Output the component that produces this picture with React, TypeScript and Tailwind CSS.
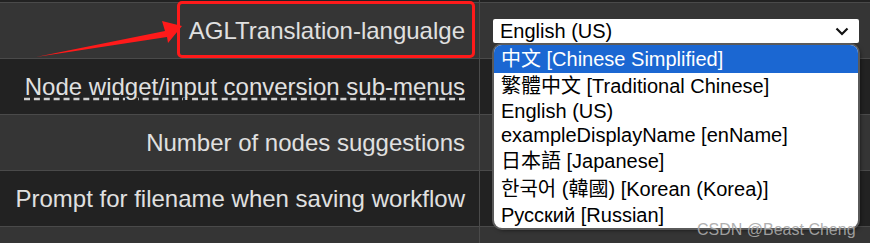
import React from "react";

const rows = [
  { label: "AGLTranslation-langualge", dark: false },
  { label: "Node widget/input conversion sub-menus", dark: true, dashed: true },
  { label: "Number of nodes suggestions", dark: false },
  { label: "Prompt for filename when saving workflow", dark: true },
  { label: "", dark: false },
];

const options = [
  { text: "中文 [Chinese Simplified]", h: "h-[28px]", active: true },
  { text: "繁體中文 [Traditional Chinese]", h: "h-[26px]" },
  { text: "English (US)", h: "h-[23px]" },
  { text: "exampleDisplayName [enName]", h: "h-[25px]" },
  { text: "日本語 [Japanese]", h: "h-[28px]" },
  { text: "한국어 (韓國) [Korean (Korea)]", h: "h-[27px]" },
  { text: "Русский [Russian]", h: "h-[25px]" },
];

const Row = ({ label, dark, dashed }: any) => {
  return (
    <div
      className={`grid grid-cols-[480px_1fr] h-[56px] border-b border-[#4a4a4a] ${
        dark ? "bg-[#222222]" : "bg-[#353535]"
      }`}
    >
      <div className="flex items-center justify-end pr-[14px] border-r border-[#4a4a4a]">
        <span
          className={
            dashed
              ? "underline decoration-dashed decoration-[#cfcfcf] underline-offset-[4px]"
              : ""
          }
        >
          {label}
        </span>
      </div>
      <div />
    </div>
  );
};

export default function App() {
  return (
    <div
      className="relative w-[870px] h-[243px] overflow-hidden bg-[#222222] text-[#e0e0e0] text-[24px]"
      style={{ fontFamily: '"Liberation Sans", "Noto Sans CJK SC", sans-serif' }}
    >
      <div className="h-[3px] border-b border-[#4a4a4a] grid grid-cols-[480px_1fr]">
        <div className="border-r border-[#4a4a4a]" />
      </div>
      {rows.map((r, i) => (
        <Row key={i} {...r} />
      ))}

      {/* select */}
      <div className="absolute left-[493px] top-[19px] w-[366px] h-[24px] bg-white rounded-[2px] flex items-center justify-between pl-[7px] pr-[10px] text-black text-[20px]">
        <span>English (US)</span>
        <svg width="14" height="9" viewBox="0 0 14 9" fill="none">
          <path d="M1.5 1.5L7 7L12.5 1.5" stroke="#111" strokeWidth="2.2" />
        </svg>
      </div>

      {/* open option list */}
      <div className="absolute left-[494px] top-[45px] w-[364px] h-[183px] bg-white rounded-[8px] overflow-hidden shadow-[0_0_0_2px_#5a5a5a,2px_2px_4px_rgba(0,0,0,0.6)] text-black text-[20px]">
        {options.map((o, i) => (
          <div
            key={i}
            className={`${o.h} flex items-center pl-[7px] ${
              o.active ? "bg-[#1b67d2] text-white" : ""
            }`}
          >
            {o.text}
          </div>
        ))}
      </div>

      {/* highlight box + arrow */}
      <div className="absolute left-[177px] top-[1px] w-[298px] h-[57px] border-[3px] border-[#ff1a1a] rounded-[5px]" />
      <svg
        className="absolute left-0 top-0"
        width="200"
        height="70"
        viewBox="0 0 200 70"
      >
        <polygon
          points="36,57 165,31 162,21 182,26 168,43 167,37"
          fill="#ff1a1a"
        />
      </svg>

      <div className="absolute left-[697px] top-[218px] text-[16px] text-[#a9a9a9] opacity-90">
        CSDN @Beast Cheng
      </div>
    </div>
  );
}
